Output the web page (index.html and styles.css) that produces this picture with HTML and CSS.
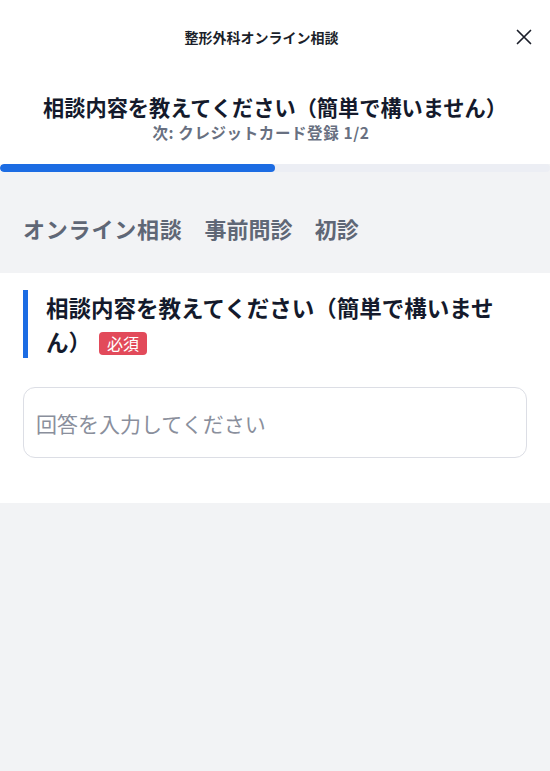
FILE: index.html
```html
<!DOCTYPE html>
<html lang="ja">
<head>
<meta charset="utf-8">
<link rel="stylesheet" href="styles.css">
</head>
<body>
<div class="page">
  <header class="topbar">
    <div class="topbar-title">整形外科オンライン相談</div>
    <button class="close" aria-label="閉じる">
      <svg width="16" height="16" viewBox="0 0 16 16"><path d="M1.5 1.5L14.5 14.5M14.5 1.5L1.5 14.5" stroke="#1b1f2a" stroke-width="1.7" stroke-linecap="round" fill="none"/></svg>
    </button>
  </header>
  <section class="intro">
    <h1 class="intro-title">相談内容を教えてください（簡単で構いません）</h1>
    <p class="intro-next">次: クレジットカード登録 1/2</p>
  </section>
  <div class="progress"><div class="progress-fill" style="width:50%"></div></div>
  <nav class="crumbs">
    <span class="crumb crumb-kana">オンライン相談</span><span class="crumb">事前問診</span><span class="crumb">初診</span>
  </nav>
  <section class="form">
    <div class="question"><span class="question-text">相談内容を教えてください（簡単で構いません）</span><span class="badge">必須</span></div>
    <div class="answer">回答を入力してください</div>
  </section>
  <div class="rest"></div>
</div>
</body>
</html>
```
FILE: styles.css
```css
* { box-sizing: border-box; }
html, body { margin: 0; padding: 0; }
body {
  background: #f2f3f5;
  font-family: "Noto Sans CJK JP", "Noto Sans", sans-serif;
  color: #141a2c;
}
.page { display: flex; flex-direction: column; min-height: 771px; }
.topbar {
  position: relative;
  height: 74px;
  background: #fff;
  display: flex;
  align-items: center;
  justify-content: center;
  padding-right: 27px;
}
.topbar-title {
  font-size: 14px;
  font-weight: 700;
  color: #1b1f2a;
  line-height: 20px;
}
.close {
  position: absolute;
  right: 18px;
  top: 29px;
  width: 16px;
  height: 16px;
  padding: 0;
  border: 0;
  background: none;
  display: flex;
}
.intro {
  background: #fff;
  padding: 18px 0 21px;
  text-align: center;
}
.intro-title {
  margin: 0;
  font-size: 21.2px;
  font-weight: 700;
  line-height: 30px;
  color: #141a2c;
}
.intro-next {
  margin: 0;
  padding-right: 28px;
  font-size: 15.5px;
  font-weight: 700;
  line-height: 21px;
  letter-spacing: 0.6px;
  color: #687081;
}
.progress {
  height: 8px;
  background: #eceef4;
  border-radius: 4px;
  overflow: hidden;
}
.progress-fill {
  height: 100%;
  background: #1c6ce3;
  border-radius: 4px;
}
.crumbs {
  padding: 40px 23px 29px;
  display: flex;
  gap: 22px;
  font-size: 22px;
  font-weight: 700;
  line-height: 32px;
  color: #5f6776;
}
.crumb-kana { letter-spacing: 0.8px; }
.form {
  background: #fff;
  padding: 17px 23px 45px;
}
.question {
  border-left: 5px solid #1c6ce3;
  padding-left: 18px;
  padding-right: 21px;
  font-size: 22.5px;
  font-weight: 700;
  line-height: 34px;
  color: #141a2c;
}
.badge {
  display: inline-block;
  margin-left: 8px;
  padding: 0 8px;
  background: #e24a5a;
  color: #fff;
  font-size: 16px;
  font-weight: 400;
  line-height: 23px;
  border-radius: 4px;
  vertical-align: 1px;
}
.answer {
  margin-top: 29px;
  height: 71px;
  border: 1.5px solid #dcdee5;
  border-radius: 12px;
  padding: 0 12px;
  display: flex;
  align-items: center;
  font-size: 21px;
  color: #8a8f9c;
}
.rest { flex: 1; }
```
